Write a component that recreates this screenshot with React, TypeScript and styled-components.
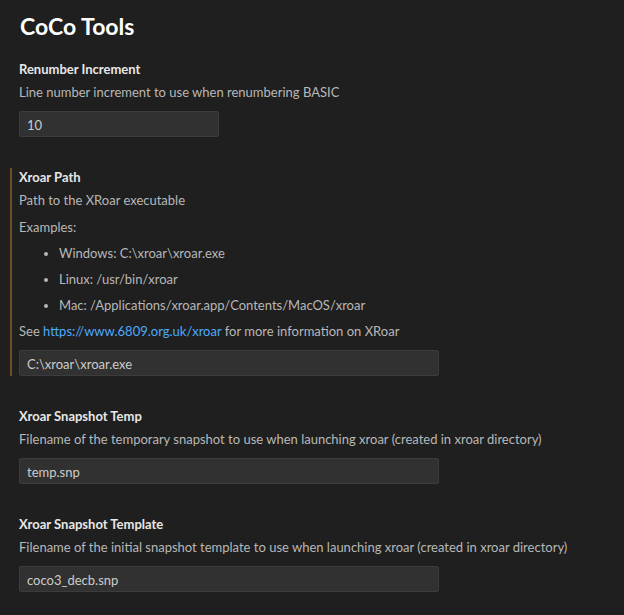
import React from "react";
import styled, { createGlobalStyle } from "styled-components";

const Global = createGlobalStyle`
  html, body {
    margin: 0;
    padding: 0;
    background: #1f1f1f;
  }
  body {
    font-family: Lato, "Open Sans", sans-serif;
    -webkit-font-smoothing: antialiased;
  }
`;

const Page = styled.div`
  width: 624px;
  height: 615px;
  background: #1f1f1f;
  overflow: hidden;
  box-sizing: border-box;
  padding-top: 8px;
`;

const Title = styled.h1`
  margin: 0 0 4px 20px;
  font-size: 23px;
  line-height: 36px;
  font-weight: 700;
  color: #ffffff;
`;

const Setting = styled.section`
  display: flex;
  flex-direction: column;
  padding: 12px 0 19px 0;
`;

const Body = styled.div<{ $active?: boolean }>`
  display: flex;
  flex-direction: column;
  margin-left: 10px;
  padding-left: 7px;
  border-left: 2px solid ${(p) => (p.$active ? "#6a5020" : "transparent")};
`;

const Label = styled.div`
  font-size: 13px;
  line-height: 18px;
  font-weight: 700;
  color: #e7e7e7;
`;

const Desc = styled.div`
  margin-top: 5px;
  display: flex;
  flex-direction: column;
  gap: 8px;
  font-size: 13px;
  line-height: 18px;
  color: #b8b8b8;
`;

const Para = styled.div<{ $gap?: boolean }>`
  margin-top: ${(p) => (p.$gap ? "1px" : "0")};
`;

const List = styled.ul`
  margin: 0;
  padding-left: 40px;
  display: flex;
  flex-direction: column;
  gap: 8px;
`;

const Link = styled.a`
  color: #4daafc;
  text-decoration: none;
`;

const Input = styled.input<{ $wide?: boolean }>`
  margin-top: 10px;
  box-sizing: border-box;
  width: ${(p) => (p.$wide ? "420px" : "200px")};
  height: 26px;
  padding: 2px 7px 0;
  background: #313131;
  border: 1px solid #3c3c3c;
  border-radius: 2px;
  color: #cccccc;
  font-family: inherit;
  font-size: 13px;
  outline: none;
`;

export default function App() {
  return (
    <Page>
      <Global />
      <Title>CoCo Tools</Title>
      <Setting>
        <Body>
          <Label>Renumber Increment</Label>
          <Desc>
            <Para>Line number increment to use when renumbering BASIC</Para>
          </Desc>
          <Input defaultValue="10" />
        </Body>
      </Setting>
      <Setting>
        <Body $active>
          <Label>Xroar Path</Label>
          <Desc>
            <Para>Path to the XRoar executable</Para>
            <Para $gap>Examples:</Para>
            <List>
              <li>Windows: C:\xroar\xroar.exe</li>
              <li>Linux: /usr/bin/xroar</li>
              <li>Mac: /Applications/xroar.app/Contents/MacOS/xroar</li>
            </List>
            <Para>
              See <Link href="#">https://www.6809.org.uk/xroar</Link> for more
              information on XRoar
            </Para>
          </Desc>
          <Input $wide defaultValue="C:\xroar\xroar.exe" />
        </Body>
      </Setting>
      <Setting>
        <Body>
          <Label>Xroar Snapshot Temp</Label>
          <Desc>
            <Para>
              Filename of the temporary snapshot to use when launching xroar
              (created in xroar directory)
            </Para>
          </Desc>
          <Input $wide defaultValue="temp.snp" />
        </Body>
      </Setting>
      <Setting>
        <Body>
          <Label>Xroar Snapshot Template</Label>
          <Desc>
            <Para>
              Filename of the initial snapshot template to use when launching
              xroar (created in xroar directory)
            </Para>
          </Desc>
          <Input $wide defaultValue="coco3_decb.snp" />
        </Body>
      </Setting>
    </Page>
  );
}
